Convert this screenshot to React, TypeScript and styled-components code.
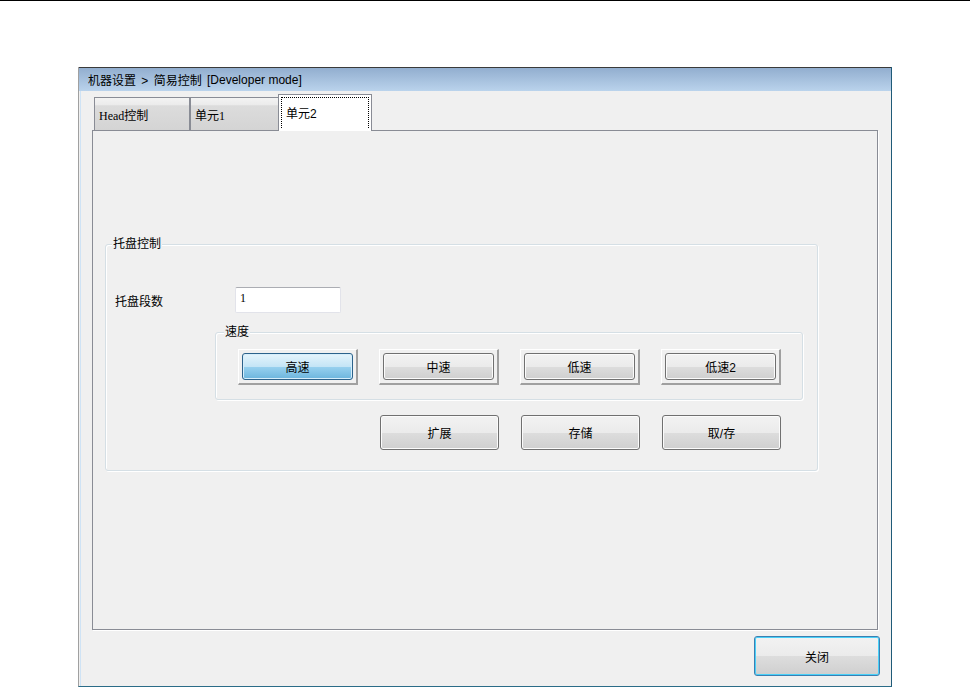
import React from "react";
import styled, { createGlobalStyle, css } from "styled-components";

const Global = createGlobalStyle`
  html, body { margin: 0; padding: 0; background: #ffffff; }
  body {
    font-family: "Liberation Sans", "Noto Sans CJK SC", sans-serif;
    font-size: 12px;
    color: #000;
  }
  * { box-sizing: border-box; }
`;

const TopRule = styled.div`
  height: 1px;
  background: #000;
`;

const Window = styled.div`
  margin: 66px 0 0 78px;
  width: 814px;
  height: 620px;
  display: flex;
  flex-direction: column;
  background: #f0f0f0;
  border-left: 1px solid #a0a0a0;
  border-right: 1px solid #1f5b78;
  border-bottom: 1px solid #2b6c88;
`;

const TitleBar = styled.div`
  height: 24px;
  flex: none;
  display: flex;
  align-items: center;
  padding-left: 9px;
  border-top: 1px solid #3a3a3a;
  background: linear-gradient(#92aecf, #bad3ec);
  font-size: 12px;
  color: #000;
  white-space: pre;
`;

const Crumb = styled.span`
  word-spacing: 2px;
`;

const Body = styled.div`
  flex: 1;
  display: flex;
  flex-direction: column;
  margin-left: 1px;
  border-left: 1px solid #cfe3f5;
  padding: 3px 11px 0 11px;
`;

const TabStrip = styled.div`
  display: flex;
  align-items: flex-end;
  height: 36px;
  flex: none;
  padding-left: 2px;
`;

const Tab = styled.div<{ $active?: boolean; $w: number; $serif?: boolean }>`
  width: ${(p) => p.$w}px;
  height: 33px;
  border: 1px solid #898c95;
  border-bottom: none;
  display: flex;
  align-items: center;
  padding-left: 4px;
  padding-top: 1px;
  font-family: ${(p) => (p.$serif ? `"Liberation Serif", "Noto Sans CJK SC", serif` : `"Liberation Sans", "Noto Sans CJK SC", sans-serif`)};
  font-size: 12px;
  ${(p) =>
    p.$active
      ? css`
          height: 37px;
          margin-bottom: -1px;
          position: relative;
          z-index: 1;
          background: #ffffff;
          margin-left: -1px;
          padding: 2px 2px 3px 2px;
          align-items: stretch;
        `
      : css`
          background: linear-gradient(#f3f3f3 0%, #ebebeb 22%, #dcdcdc 24%, #d4d4d4 100%);
        `}
`;

const FocusRect = styled.div`
  flex: 1;
  border: 1px dotted #000;
  border-bottom: none;
  display: flex;
  align-items: center;
  padding-left: 4px;
  padding-bottom: 2px;
`;

const Panel = styled.div`
  width: 786px;
  height: 500px;
  flex: none;
  border: 1px solid #898c95;
  box-shadow: 1px 1px 0 #ffffff;
  background: #f0f0f0;
  padding: 113px 0 0 12px;
`;

const Group = styled.div<{ $w: number; $h: number }>`
  position: relative;
  width: ${(p) => p.$w}px;
  height: ${(p) => p.$h}px;
  border: 1px solid #d5dfe5;
  border-radius: 3px;
  box-shadow: inset 1px 1px 0 #ffffff, 1px 1px 0 #ffffff;
`;

const GroupTitle = styled.span<{ $left: number }>`
  position: absolute;
  top: -9px;
  left: ${(p) => p.$left}px;
  padding: 0 1px;
  background: #f0f0f0;
  line-height: 16px;
  font-size: 12px;
`;

const GroupInner = styled.div`
  display: flex;
  flex-direction: column;
  padding: 42px 0 0 9px;
`;

const FieldRow = styled.div`
  display: flex;
  align-items: center;
  height: 26px;
`;

const FieldLabel = styled.span`
  width: 120px;
  padding-top: 1px;
`;

const TextInput = styled.div`
  width: 106px;
  height: 26px;
  background: #ffffff;
  border: 1px solid #e2e3ea;
  border-top-color: #abadb3;
  border-radius: 2px;
  padding: 3px 0 0 4px;
  font-family: "Liberation Serif", serif;
  font-size: 12px;
  align-self: flex-start;
`;

const SpeedWrap = styled.div`
  margin: 19px 0 0 100px;
`;

const ButtonRowFramed = styled.div`
  display: grid;
  grid-template-columns: repeat(4, 120px);
  column-gap: 21px;
  padding: 16px 0 0 22px;
`;

const Frame = styled.div`
  height: 36px;
  padding: 3px;
  border-top: 1px solid #ffffff;
  border-left: 1px solid #ffffff;
  border-right: 2px solid #a0a0a0;
  border-bottom: 2px solid #a0a0a0;
  background: #f0f0f0;
  display: flex;
`;

const Button = styled.div<{ $primary?: boolean; $focus?: boolean }>`
  flex: 1;
  display: flex;
  align-items: center;
  justify-content: center;
  border: 1px solid #707070;
  border-radius: 3px;
  font-size: 12px;
  box-shadow: inset 0 0 0 1px #fbfbfb;
  background: linear-gradient(#f2f2f2 0%, #ebebeb 50%, #dddddd 51%, #cfcfcf 100%);
  ${(p) =>
    p.$primary &&
    css`
      border-color: #2c628b;
      box-shadow: inset 0 0 0 1px #d6eefb;
      background: linear-gradient(#e5f4fc 0%, #c4e5f6 50%, #98d1ef 51%, #6cb5dd 100%);
    `}
  ${(p) =>
    p.$focus &&
    css`
      border-color: #3c7fb1;
      box-shadow: inset 0 0 0 1px #48d0f8;
    `}
`;

const ButtonRow = styled.div`
  display: grid;
  grid-template-columns: repeat(3, 119px);
  column-gap: 22px;
  height: 35px;
  margin: 15px 0 0 265px;
`;

const Footer = styled.div`
  flex: 1;
  display: flex;
  justify-content: flex-end;
  align-items: flex-start;
  padding-top: 6px;
`;

const CloseButton = styled.div`
  width: 126px;
  height: 40px;
  display: flex;
`;

export default function App() {
  return (
    <>
      <Global />
      <TopRule />
      <Window>
        <TitleBar>
          <Crumb>{"机器设置 > 简易控制 "}</Crumb>
          {"[Developer mode]"}
        </TitleBar>
        <Body>
          <TabStrip>
            <Tab $w={96} $serif>Head控制</Tab>
            <Tab $w={89} $serif>单元1</Tab>
            <Tab $w={94} $active>
              <FocusRect>单元2</FocusRect>
            </Tab>
          </TabStrip>
          <Panel>
            <Group $w={713} $h={227}>
              <GroupTitle $left={6}>托盘控制</GroupTitle>
              <GroupInner>
                <FieldRow>
                  <FieldLabel>托盘段数</FieldLabel>
                  <TextInput>1</TextInput>
                </FieldRow>
                <SpeedWrap>
                  <Group $w={588} $h={68}>
                    <GroupTitle $left={8}>速度</GroupTitle>
                    <ButtonRowFramed>
                      <Frame><Button $primary>高速</Button></Frame>
                      <Frame><Button>中速</Button></Frame>
                      <Frame><Button>低速</Button></Frame>
                      <Frame><Button>低速2</Button></Frame>
                    </ButtonRowFramed>
                  </Group>
                </SpeedWrap>
                <ButtonRow>
                  <Button>扩展</Button>
                  <Button>存储</Button>
                  <Button>取/存</Button>
                </ButtonRow>
              </GroupInner>
            </Group>
          </Panel>
          <Footer>
            <CloseButton>
              <Button $focus>关闭</Button>
            </CloseButton>
          </Footer>
        </Body>
      </Window>
    </>
  );
}
